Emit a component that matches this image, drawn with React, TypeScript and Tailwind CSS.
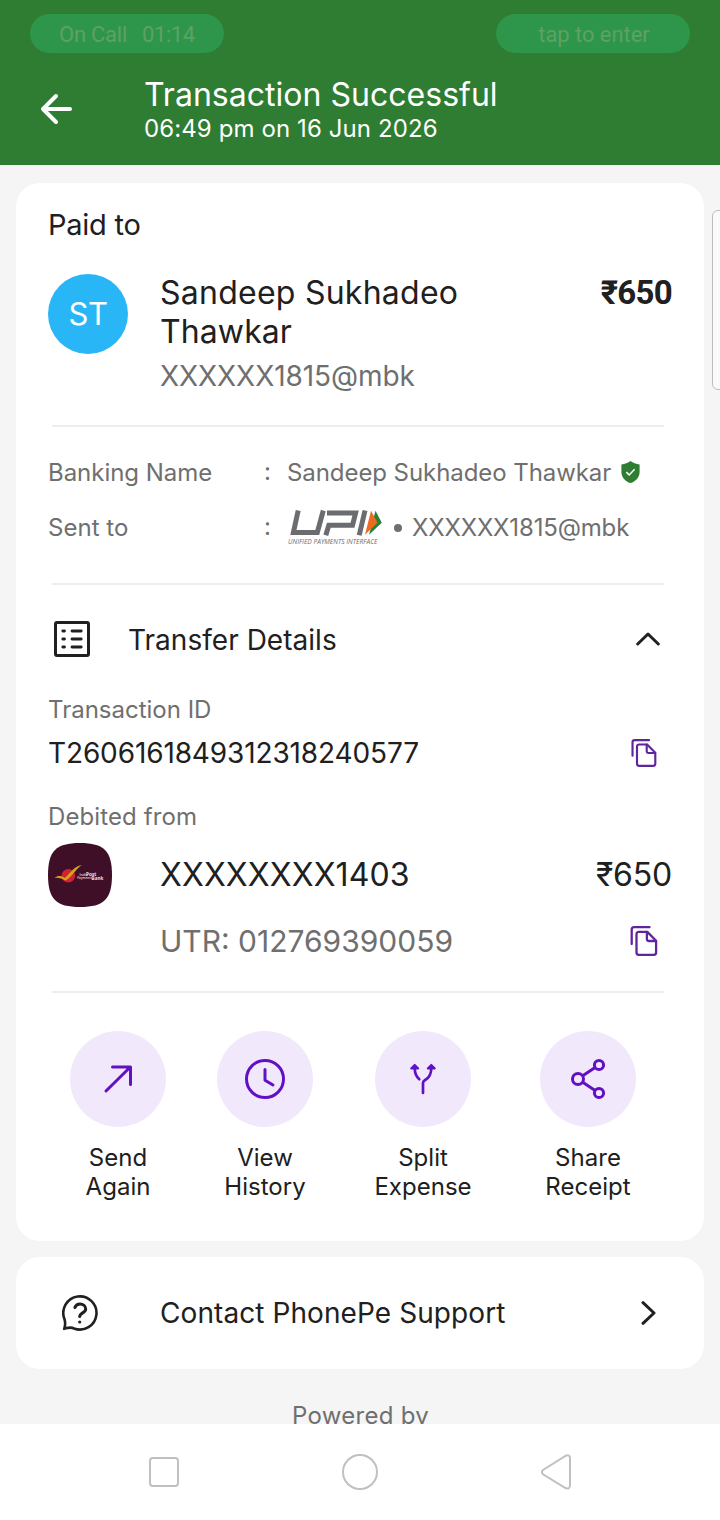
import React from "react";

type IconProps = { className?: string };

const BackArrow = () => (
  <svg width="34" height="32" viewBox="0 0 34 32" fill="none" stroke="white" strokeWidth="4" strokeLinecap="round" strokeLinejoin="round">
    <path d="M16 3 3 16l13 13M3.5 16H30" />
  </svg>
);

const ListIcon = () => (
  <svg width="36" height="36" viewBox="0 0 36 36" fill="none" stroke="#202020" strokeLinecap="round">
    <rect x="1.5" y="1.5" width="33" height="33" rx="1.5" strokeWidth="3" />
    <path d="M8.8 10h1.7M8.8 18h1.7M8.8 26h1.7M18 10h9.2M18 18h9.2M18 26h9.2" strokeWidth="2.8" />
  </svg>
);

const CopyIcon = ({ className }: IconProps) => (
  <svg className={className} viewBox="0 0 27 30" fill="none" stroke="#5f259f" strokeWidth="2.3" strokeLinecap="round" strokeLinejoin="round">
    <path d="M1.2 18V3.6A2.4 2.4 0 0 1 3.6 1.2H19" />
    <path d="M8.2 5.9H16.8L25.6 14.8V26.6A2.2 2.2 0 0 1 23.4 28.8H8.2A2.2 2.2 0 0 1 6 26.6V8.1A2.2 2.2 0 0 1 8.2 5.9Z" />
    <path d="M16.4 6V13.2A1.8 1.8 0 0 0 18.2 15H25.4" />
  </svg>
);

const ShieldIcon = () => (
  <svg className="-mt-0.5" width="19" height="22" viewBox="0 0 19 22">
    <path d="M9.500 0C12 1.900 15 3 18.600 3.600V11C18.600 16.400 14.600 20.700 9.500 22 4.400 20.700.4 16.400.4 11V3.600C4 3 7 1.900 9.500 0Z" fill="#2e7d32" />
    <path d="m5.300 11.100 2.900 2.800 5.400-5.600" fill="none" stroke="white" strokeWidth="1.500" />
  </svg>
);

const UpiLogo = () => (
  <svg className="overflow-visible" width="96" height="38" viewBox="0 0 96 38">
    <g fill="none" stroke="#6b6c70" strokeWidth="5" strokeLinejoin="miter">
      <path d="M10.200 1.500 5.400 23.500H29.300L35.300 1.500" />
      <path d="M37.800 26.300 40.800 16.200H64.500L67.600 4H39" />
      <path d="M71.200 26.300 77 1.500" />
    </g>
    <path d="M87.500 1.800 93.800 13.800 81 25.800Z" fill="#27803a" />
    <path d="M83 1.800 89.500 13.800 77 25.800Z" fill="#ed6b21" />
    <text x="0" y="35" fontFamily="Open Sans, sans-serif" fontSize="7" fontStyle="italic" fontWeight="500" fill="#6b6c70" textLength="89.500" lengthAdjust="spacingAndGlyphs">UNIFIED PAYMENTS INTERFACE</text>
  </svg>
);

const BankLogo = () => (
  <svg width="64" height="64" viewBox="0 0 64 64">
    <path d="M32 0C56 0 64 8 64 32S56 64 32 64 0 56 0 32 8 0 32 0Z" fill="#3f0f27" />
    <circle cx="20.300" cy="32.800" r="6.800" fill="#cf2430" />
    <path d="M6.500 34.800C10 32.600 13 32.400 16.500 35 20.500 33 25 23 34 22 29 24.500 24 34 17.500 37.600 14 35.300 10.500 34.300 6.500 34.800Z" fill="#d9a21c" />
    <g fill="#eadfe4" fontFamily="Open Sans, sans-serif" fontWeight="700">
      <text x="31.500" y="32.800" fontSize="3.400" fontWeight="600">India</text>
      <text x="38" y="32.800" fontSize="4.800">Post</text>
      <text x="29.200" y="36.400" fontSize="3.100" fontWeight="600">Payments</text>
      <text x="43.600" y="36.900" fontSize="4.600">Bank</text>
    </g>
  </svg>
);

const SendIcon = () => (
  <svg width="48" height="48" viewBox="0 0 48 48" fill="none" stroke="#6210c4" strokeWidth="3" strokeLinecap="round" strokeLinejoin="round">
    <path d="M12 36 36.300 12M18.500 12H36.500V29.500" />
  </svg>
);

const ClockIcon = () => (
  <svg width="48" height="48" viewBox="0 0 48 48" fill="none" stroke="#6210c4" strokeWidth="3" strokeLinecap="round" strokeLinejoin="round">
    <circle cx="24" cy="24" r="18.500" />
    <path d="M24 14.500V25.200L32 30" />
  </svg>
);

const SplitIcon = () => (
  <svg width="48" height="48" viewBox="0 0 48 48" fill="none" stroke="#6210c4" strokeWidth="2.700" strokeLinecap="round" strokeLinejoin="round">
    <path d="M24 38V28C24 26.500 24.500 26 25.800 25.300 29.500 23.300 32.300 19.500 32.300 13" />
    <path d="M15.700 13C15.700 18 17 21.500 20.300 24.200" />
    <path d="M15.700 9.900 19.200 13.400H12.200ZM32.300 9.900 35.800 13.400H28.800Z" fill="#6210c4" strokeWidth="2" />
  </svg>
);

const ShareIcon = () => (
  <svg width="48" height="48" viewBox="0 0 48 48" fill="none" stroke="#6210c4" strokeWidth="3">
    <circle cx="14" cy="24" r="5.500" />
    <circle cx="35" cy="10" r="4.600" />
    <circle cx="35" cy="38" r="4.600" />
    <path d="M18.700 20.800 31.100 12.600M18.700 27.200 31.100 35.400" />
  </svg>
);

const HelpIcon = () => (
  <svg width="36" height="36" viewBox="0 0 36 36" fill="none" stroke="#202020" strokeWidth="2.600" strokeLinecap="round" strokeLinejoin="round">
    <path d="M2.200 33.800C3.600 30.200 3.400 27.500 2.500 24.200A16.600 16.600 0 1 1 12 33.500C8.500 31.600 6.500 32.600 2.200 33.800Z" />
    <path d="M12.900 12.500C13.700 9.800 15.600 8.900 18 8.900 21 8.900 23.700 11 23.700 14 23.700 18 17.700 17.700 17.700 21.600" strokeWidth="3" />
    <circle cx="17.700" cy="27" r="1.600" fill="#202020" stroke="none" />
  </svg>
);

const Divider = () => <div className="mr-2 ml-1 h-0.5 shrink-0 bg-[#eeeeee]" />;

const actions = [
  { icon: <SendIcon />, lines: ["Send", "Again"], gap: "ml-[22px]" },
  { icon: <ClockIcon />, lines: ["View", "History"], gap: "ml-[51px]" },
  { icon: <SplitIcon />, lines: ["Split", "Expense"], gap: "ml-[62px]" },
  { icon: <ShareIcon />, lines: ["Share", "Receipt"], gap: "ml-[69px]" },
];

const Header = () => (
  <header className="flex h-[165px] shrink-0 flex-col bg-[#2e7d32]">
    <div className="flex justify-between px-[30px] pt-3.5 font-[Roboto,sans-serif] text-[22px] leading-[41px] text-[#5ea164]">
      <div className="flex h-[39px] w-[194px] gap-[15px] rounded-full bg-[#2e964b] pl-[29px]">
        <span className="tracking-[-0.25px]">On Call</span>
        <span className="tracking-[-0.4px]">01:14</span>
      </div>
      <div className="h-[39px] w-[194px] rounded-full bg-[#2e964b] pl-0.5 text-center">
        <span className="tracking-[-0.05px]">tap to enter</span>
      </div>
    </div>
    <div className="flex pt-[22px] pl-10 text-white">
      <div className="mr-[70px] pt-[18px]"><BackArrow /></div>
      <div>
        <h1 className="text-[32px] leading-[39px] tracking-[0.02px]">Transaction Successful</h1>
        <p className="text-[24px] leading-[29px] tracking-[0.1px]">06:49 pm on 16 Jun 2026</p>
      </div>
    </div>
  </header>
);

const ReceiptCard = () => (
  <section className="mx-4 flex h-[1058px] shrink-0 flex-col rounded-3xl bg-white px-8">
    <h2 className="mt-6 text-[29px] leading-[35px] tracking-[-0.25px]">Paid to</h2>
    <div className="mt-[31px] flex">
      <div className="mt-px mr-8 flex size-20 items-center justify-center rounded-full bg-[#29b6f6] text-[31px] tracking-[-0.5px] text-white">ST</div>
      <div className="flex-1">
        <p className="w-[340px] text-[32px] leading-[39px] tracking-[0.25px]">Sandeep Sukhadeo <span className="tracking-[0.1px]">Thawkar</span></p>
        <p className="mt-2 text-[28px] leading-[34px] tracking-[-0.07px] text-[#6f6f6f]">XXXXXX1815@mbk</p>
      </div>
      <p className="font-[Roboto,sans-serif] text-[33px] leading-[39px] font-bold tracking-[-0.7px]">₹650</p>
    </div>
    <div className="h-8 shrink-0" />
    <Divider />
    <div className="mt-[31px] flex h-[29px] items-center text-[24px] leading-[29px] text-[#6f6f6f]">
      <span className="w-[216px] tracking-[-0.03px]">Banking Name</span>
      <span className="-mt-0.5 w-[23px]">:</span>
      <span className="mr-[9.5px] tracking-[-0.07px]">Sandeep Sukhadeo Thawkar</span>
      <ShieldIcon />
    </div>
    <div className="mt-[26px] flex h-[29px] items-center text-[24px] leading-[29px] text-[#6f6f6f]">
      <span className="w-[216px] tracking-[0.03px]">Sent to</span>
      <span className="-mt-0.5 w-6">:</span>
      <UpiLogo />
      <span className="mr-[10px] ml-2.5 size-2 rounded-full bg-[#6f6f6f]" />
      <span className="tracking-[-0.15px]">XXXXXX1815@mbk</span>
    </div>
    <div className="h-[41px] shrink-0" />
    <Divider />
    <div className="mt-9 flex h-9 items-center pr-3 pl-1.5">
      <ListIcon />
      <h2 className="mt-0.5 ml-[38px] flex-1 text-[28px] leading-[34px] tracking-[0.03px]">Transfer Details</h2>
      <svg width="24" height="14" viewBox="0 0 24 14" fill="none" stroke="#202020" strokeWidth="3" strokeLinecap="round" strokeLinejoin="round"><path d="M1.700 12 12 2l10.300 10" /></svg>
    </div>
    <p className="mt-[38px] text-[24px] leading-[29px] text-[#6f6f6f]">Transaction ID</p>
    <div className="mt-3 flex h-[34px] items-center justify-between pr-[15px]">
      <p className="text-[28px] leading-[34px] tracking-[-0.13px]">T2606161849312318240577</p>
      <CopyIcon className="h-7 w-[26px]" />
    </div>
    <p className="mt-8 text-[24px] leading-[29px] tracking-[0.1px] text-[#6f6f6f]">Debited from</p>
    <div className="mt-3 flex h-16 items-center text-[32px] leading-[39px]">
      <BankLogo />
      <p className="-mt-0.5 ml-12 flex-1 tracking-[0.12px]">XXXXXXXX1403</p>
      <p className="-mt-0.5 tracking-[-0.2px]">₹650</p>
    </div>
    <div className="mt-4 flex h-9 items-center justify-between pr-[14px] pl-28">
      <p className="text-[30px] leading-9 text-[#6f6f6f]">UTR: 012769390059</p>
      <CopyIcon className="h-[30px] w-[28px]" />
    </div>
    <div className="h-8 shrink-0" />
    <Divider />
    <div className="mt-[38px] flex">
      {actions.map((a) => (
        <button key={a.lines[0]} className={a.gap + " flex w-24 shrink-0 flex-col items-center"}>
          <span className="flex size-24 items-center justify-center rounded-full bg-[#f2e8fc]">{a.icon}</span>
          <span className="mt-4 text-[24px] leading-[29px] tracking-[0.03px] whitespace-nowrap">
            {a.lines[0]}<br />{a.lines[1]}
          </span>
        </button>
      ))}
    </div>
  </section>
);

export default function App() {
  return (
    <div className="relative flex h-[1520px] w-[720px] flex-col overflow-hidden bg-[#f5f5f5] font-[Inter,sans-serif] text-[#202020]">
      <Header />
      <main className="flex h-[1259px] shrink-0 flex-col overflow-hidden pt-[18px]">
        <ReceiptCard />
        <section className="mx-4 mt-4 flex h-28 shrink-0 items-center rounded-3xl bg-white pr-[48px] pl-[46px]">
          <HelpIcon />
          <p className="ml-[62px] flex-1 text-[28px] leading-[34px] tracking-[0.08px]">Contact PhonePe Support</p>
          <svg width="15" height="24" viewBox="0 0 15 24" fill="none" stroke="#202020" strokeWidth="3" strokeLinecap="round" strokeLinejoin="round"><path d="M2 1.700 13 12 2 22.300" /></svg>
        </section>
        <p className="mt-8 shrink-0 pl-px text-center text-[24px] leading-[29px] tracking-[0.3px] text-[#6f6f6f]">Powered by</p>
      </main>
      <nav className="flex h-24 shrink-0 items-center bg-white pl-[149px]">
        <svg width="30" height="30" viewBox="0 0 30 30" fill="none" stroke="#c0c0c0" strokeWidth="2"><rect x="1" y="1" width="28" height="28" rx="3" /></svg>
        <svg className="ml-[163px]" width="36" height="36" viewBox="0 0 36 36" fill="none" stroke="#c0c0c0" strokeWidth="2"><circle cx="18" cy="18" r="17" /></svg>
        <svg className="ml-[163px]" width="31" height="36" viewBox="0 0 31 36" fill="none" stroke="#c0c0c0" strokeWidth="2"><path d="M2 16 24.500 1.800Q29 .2 29 4V31Q29 35.600 24.500 34L2 20.300Q-.2 18 2 16Z" /></svg>
      </nav>
      <div className="absolute top-[210px] left-[712px] h-[180px] w-5 rounded-md border border-[#bdbdbd] bg-[#fafafa]" />
    </div>
  );
}
